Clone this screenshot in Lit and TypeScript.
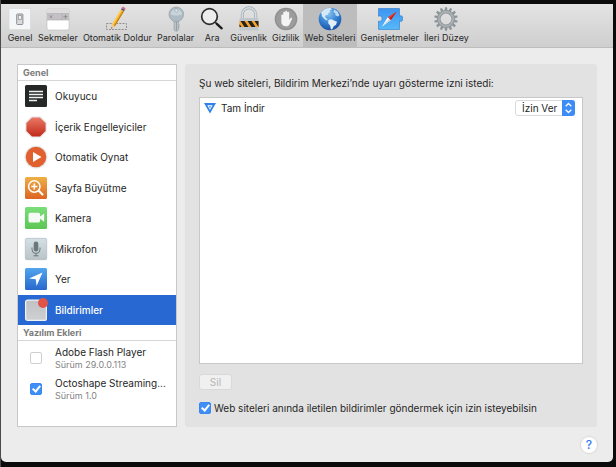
import { LitElement, html, css, svg, TemplateResult } from "lit";
import { customElement, state } from "lit/decorators.js";
import { classMap } from "lit/directives/class-map.js";

interface Entry {
  label: string;
  art: TemplateResult;
}

const gearTeeth = Array.from({ length: 14 }, (_, i) => i * (360 / 14));

// Toolbar drawings share a 26x26 canvas.
const tools: Entry[] = [
  {
    label: "Genel",
    art: svg`
      <rect x="2" y="2.5" width="21.500" height="21" rx="1" fill="#f4f6f7" stroke="#d3d6d8" stroke-width=".6"/>
      <rect x="9.700" y="8" width="6.200" height="10.500" rx=".8" fill="#d9dadb" stroke="#8d9093"/>
      <rect x="11.300" y="9.300" width="3" height="4" fill="#f5f5f5" stroke="#85888b" stroke-width=".7"/>`,
  },
  {
    label: "Sekmeler",
    art: svg`
      <rect x="2" y="2.500" width="22" height="21.500" rx="2" fill="#fff" stroke="#bcbcbc" stroke-width=".6"/>
      <path d="M2 4.500a2 2 0 0 1 2-2h18a2 2 0 0 1 2 2V7.500H2z" fill="#dedcdd"/>
      <rect x="2" y="7.500" width="22" height="6.500" fill="#c3c1c3"/>
      <path d="M2 7.500h22M2 14h22M17 7.500V14" stroke="#aaa8aa" stroke-width=".6"/>
      <path d="M4.500 9.300l2.800 2.800M7.300 9.300l-2.800 2.800M20.500 8.700v4M18.500 10.700h4" stroke="#8a888a" stroke-width=".9"/>`,
  },
  {
    label: "Otomatik Doldur",
    art: svg`
      <rect x="2.500" y="17.500" width="20" height="6" fill="none" stroke="#8e8e8e" stroke-dasharray="2 1.200"/>
      <path d="M7.300 22.800L8 18.500 17 3.400l3 1.900L11 20.300z" fill="#f1ae28"/>
      <path d="M8 18.500L17 3.400l1 .6L9 19.200z" fill="#fbd25c"/>
      <path d="M10 19.800L19 4.700l1 .6-9 15z" fill="#c87d16"/>
      <path d="M7.300 22.800L8 18.500l3 1.800z" fill="#ead0a0"/>
      <path d="M7.300 22.800l.2-1.600 1 .6z" fill="#222"/>
      <path d="M17 3.400l.9-1.500 3 1.900-.9 1.500z" fill="#4b5a66"/>
      <path d="M17.900 1.900c1-1.500 4-.2 3 1.900z" fill="#e1678f" stroke="#d4557f" stroke-width=".6"/>`,
  },
  {
    label: "Parolalar",
    art: svg`
      <path d="M11 14h4.600v10l-2.300 1.500L11 24z" fill="#b9c1c6" stroke="#929ca2" stroke-width=".6"/>
      <path d="M13.500 15v9.500" stroke="#8c969c" stroke-width=".8"/>
      <path d="M15.600 17.500l1.400 1-1.400 1 1.400 1.200-1.400 1.300z" fill="#a2acb2"/>
      <circle cx="13.300" cy="8.300" r="7.300" fill="#adbbc3" stroke="#8f9da5" stroke-width=".7"/>
      <path d="M7.500 8a5.900 5.900 0 0 1 11.600 0c-3 2-8.500 2-11.600 0z" fill="#c9d4da"/>
      <circle cx="13.300" cy="4.500" r="1.500" fill="#eef2f4" stroke="#81909a" stroke-width=".6"/>`,
  },
  {
    label: "Ara",
    art: svg`
      <circle cx="10.500" cy="10.500" r="7.800" fill="#f2f2f2" fill-opacity=".75" stroke="#2e2e2e" stroke-width="1.700"/>
      <path d="M16.200 16.200l2 2" stroke="#2e2e2e" stroke-width="1.600"/>
      <path d="M17.800 17.800l4.900 4.500" stroke="#1c1c1c" stroke-width="2.400" stroke-linecap="round"/>`,
  },
  {
    label: "Güvenlik",
    art: svg`
      <path d="M6.300 13V8.500a6.700 6.700 0 0 1 13.400 0V13" fill="none" stroke="#a1adb5" stroke-width="3"/>
      <path d="M6.300 13V8.500a6.700 6.700 0 0 1 13.400 0V13" fill="none" stroke="#d5dde2" stroke-width="1.500"/>
      <rect x="3.500" y="12" width="19" height="12.500" rx="1" fill="#c0c7cc"/>
      <rect x="3.500" y="15" width="19" height="6" fill="#f6a32b"/>
      <path d="M4.500 15h4l4 6h-4zM11.500 15h4l4 6h-4zM18.500 15h4v6zM3.500 18l2 3h-2z" fill="#26221e"/>`,
  },
  {
    label: "Gizlilik",
    art: svg`
      <circle cx="13" cy="13" r="11.300" fill="#8f8f8f"/>
      <circle cx="13" cy="13" r="10" fill="#9c9c9c"/>
      <path d="M8.300 16V9.200a1 1 0 0 1 1.900 0V12V6.800a1 1 0 0 1 2 0V12 5.800a1 1 0 0 1 2 0V12 6.800a1 1 0 0 1 2 0V14l1.300-1.900c.8-.9 2-.1 1.500.9L16.700 18c-.7 1.600-1.700 2.300-3.600 2.300-3 0-4.800-1.700-4.800-4.300z" fill="#f4f4f4"/>`,
  },
  {
    label: "Web Siteleri",
    art: svg`
      <defs><radialGradient id="sea" cx=".42" cy=".25" r=".8">
        <stop offset="0" stop-color="#8cc6f3"/><stop offset=".5" stop-color="#3a86d6"/><stop offset="1" stop-color="#134a9c"/>
      </radialGradient></defs>
      <circle cx="13" cy="13" r="11.300" fill="url(#sea)"/>
      <path d="M4 6.500C6.500 3 10 1.800 13.500 2l1.500 1.500-2.500.7 1 1.800-2 .8-.8 2.200-2.200.3-.3 2.200 2 1.300.3 1.700-2.800-1.200-2.700-3-.4-2.300z" fill="#d5e8f5"/>
      <path d="M11.500 13.700l3-.5 3 1.500 2.500 1-1 3-2.300 1.500-1.500 3-1.300.4-.7-3.800-2-2.600z" fill="#e3f0f8"/>
      <path d="M17 3.500l3.500 2 2 3.500-1.500 1.500-2.500-1-.2-2-1.800-1.500z" fill="#bcd9f0"/>`,
  },
  {
    label: "Genişletmeler",
    art: svg`
      <defs><linearGradient id="piece" x2="0" y2="1">
        <stop offset="0" stop-color="#3d94f0"/><stop offset="1" stop-color="#56b9f8"/>
      </linearGradient></defs>
      <path d="M1.500 2.500h21v7.700c1-.9 3.200-.8 3.200 1.700v1.300c0 2.400-2.200 2.600-3.200 1.700v8.600h-21V15c1.200.8 3.500.5 3.500-2.400S2.700 9.500 1.500 10.300z" fill="url(#piece)" stroke="#2b79c9" stroke-width=".6"/>
      <path d="M19.800 5.500L10.700 11.300l3 3z" fill="#ec3b30"/>
      <path d="M19.800 5.500L12.200 12.800l1.500 1.500z" fill="#b92320"/>
      <path d="M5 20.500l5.700-9.200 3 3z" fill="#fff"/>
      <path d="M5 20.500l7.200-7.700 1.500 1.500z" fill="#ccd5dc"/>`,
  },
  {
    label: "İleri Düzey",
    art: svg`
      ${gearTeeth.map((a) => svg`<path d="M12 1.200h2l.6 4h-3.200z" fill="#8c9498" transform="rotate(${a} 13 13)"/>`)}
      <circle cx="13" cy="13" r="7.200" fill="none" stroke="#929a9e" stroke-width="3.600"/>
      <circle cx="13" cy="13" r="7.200" fill="none" stroke="#adb4b8" stroke-width="1.500"/>`,
  },
];

// Sidebar drawings share a 24x24 canvas.
const sections: Entry[] = [
  {
    label: "Okuyucu",
    art: svg`
      <rect x="1" y="1" width="22" height="22" rx="1.500" fill="#262828"/>
      <path d="M5 7.500h14M5 10.500h14M5 13.500h14M5 16.500h8" stroke="#f1f1f1" stroke-width="1.500"/>`,
  },
  {
    label: "İçerik Engelleyiciler",
    art: svg`
      <defs><linearGradient id="stop" x2="0" y2="1">
        <stop offset="0" stop-color="#ea7965"/><stop offset="1" stop-color="#c02a18"/>
      </linearGradient></defs>
      <path d="M7.500 1.200h9l6.300 6.300v9l-6.300 6.300h-9L1.200 16.500v-9z" fill="#e9eaeb"/>
      <path d="M8 2.400h8L21.600 8v8L16 21.600H8L2.400 16V8z" fill="url(#stop)"/>`,
  },
  {
    label: "Otomatik Oynat",
    art: svg`
      <circle cx="12" cy="12" r="11.600" fill="#e7e9eb"/>
      <circle cx="12" cy="12" r="10.300" fill="#e0602f"/>
      <path d="M9 7v10l8.500-5z" fill="#fff"/>`,
  },
  {
    label: "Sayfa Büyütme",
    art: svg`
      <defs><linearGradient id="zoom" x2="0" y2="1">
        <stop offset="0" stop-color="#efb044"/><stop offset="1" stop-color="#dc6425"/>
      </linearGradient></defs>
      <rect x="1" y="1" width="22" height="22" rx="1.500" fill="url(#zoom)"/>
      <circle cx="10.300" cy="10.500" r="5.700" fill="none" stroke="#fff" stroke-width="1.500"/>
      <path d="M14.500 14.500l4 4" stroke="#fff" stroke-width="2" stroke-linecap="round"/>
      <path d="M10.300 7.500v6M7.300 10.500h6" stroke="#fff" stroke-width="1.600"/>`,
  },
  {
    label: "Kamera",
    art: svg`
      <defs><linearGradient id="cam" x2="0" y2="1">
        <stop offset="0" stop-color="#7ade78"/><stop offset="1" stop-color="#5cc653"/>
      </linearGradient></defs>
      <rect x="1" y="1" width="22" height="22" rx="1.500" fill="url(#cam)"/>
      <rect x="4.500" y="6.800" width="11.500" height="9.800" rx="1.500" fill="#f6faf6"/>
      <path d="M16 10.500l4.200-3v8.300l-4.200-3z" fill="#f6faf6"/>`,
  },
  {
    label: "Mikrofon",
    art: svg`
      <defs><linearGradient id="mic" x2="0" y2="1">
        <stop offset="0" stop-color="#d3e0e5"/><stop offset="1" stop-color="#b9c4c7"/>
      </linearGradient></defs>
      <rect x="1.300" y="1.300" width="21.400" height="21.400" rx="1.500" fill="url(#mic)" stroke="#a9b4b8" stroke-width=".6"/>
      <rect x="9.700" y="4.500" width="4.600" height="10" rx="2.300" fill="#6d777b"/>
      <path d="M8 10.500v2a4 4 0 0 0 8 0v-2M12 16.500v2.300M9.500 18.800h5" fill="none" stroke="#6d777b"/>`,
  },
  {
    label: "Yer",
    art: svg`
      <defs><linearGradient id="loc" x2="0" y2="1">
        <stop offset="0" stop-color="#52a5ee"/><stop offset="1" stop-color="#2768cc"/>
      </linearGradient></defs>
      <rect x="1" y="1" width="22" height="22" rx="1.500" fill="url(#loc)"/>
      <path d="M18.500 5.500L5 11.600l6.800.7.800 6.700z" fill="#fff"/>`,
  },
  {
    label: "Bildirimler",
    art: svg`
      <defs><linearGradient id="note" x2="0" y2="1">
        <stop offset="0" stop-color="#bfc1c4"/><stop offset="1" stop-color="#cfd0d2"/>
      </linearGradient></defs>
      <rect x="1.600" y="2.100" width="20.800" height="20.300" rx="2" fill="url(#note)" stroke="#f0f1f3" stroke-width="1.200"/>
      <circle cx="19" cy="5" r="5" fill="#e05349"/>`,
  },
];

const plugins = [
  { id: "flash", name: "Adobe Flash Player", version: "Sürüm 29.0.0.113", on: false },
  { id: "octo", name: "Octoshape Streaming...", version: "Sürüm 1.0", on: true },
];

@customElement("app-root")
export class AppRoot extends LitElement {
  @state() private section = "Bildirimler";

  static styles = css`
    :host {
      display: flex;
      box-sizing: border-box;
      min-height: 100vh;
      padding: 4px 3px 5px 1px;
      background: linear-gradient(to right, #4c4c4c 1px, #0b0b0b 1px);
      color: #262626;
      font-family: Inter, "Liberation Sans", sans-serif;
      font-size: 10px;
      line-height: 14px;
    }
    button, select, input { font: inherit; color: inherit; margin: 0; }
    button { border: 0; padding: 0; background: none; }
    svg { display: block; flex: none; }
    .window {
      flex: 1;
      min-width: 0;
      display: flex;
      flex-direction: column;
      background: #ececec;
      border-radius: 0 0 5px 5px;
      overflow: hidden;
    }
    .toolbar {
      display: flex;
      gap: 1px;
      padding-left: 4px;
      border-bottom: 1px solid #bdbdbd;
      background: linear-gradient(#e3e3e3, #cfcfcf);
    }
    .tool {
      display: flex;
      flex-direction: column;
      align-items: center;
      padding: 2px 2px 3px;
      font-size: 9px;
      line-height: 12px;
      white-space: nowrap;
    }
    .tool.on { background: #bdbdbd; }
    .content {
      flex: 1;
      display: grid;
      grid-template-columns: 160px 1fr;
      gap: 8px;
      padding: 16px 16px 8px;
    }
    .sidebar {
      display: flex;
      flex-direction: column;
      box-sizing: border-box;
      background: #fff;
      border: 1px solid #c8c8c8;
    }
    .heading {
      margin: 0;
      padding: 1px 5px 0;
      border-bottom: 1px solid #d6d6d6;
      color: #7c7c7c;
      font-size: 9px;
      font-weight: 700;
      line-height: 14px;
    }
    .sections {
      display: grid;
      grid-auto-rows: 1fr;
      height: 244px;
      margin: 0;
      padding: 0;
      list-style: none;
    }
    .section {
      display: flex;
      align-items: center;
      gap: 7px;
      width: 100%;
      height: 100%;
      padding: 0 6px;
      text-align: left;
    }
    .section.on { background: #2768d2; color: #fff; font-weight: 500; }
    .plugin {
      display: grid;
      grid-template-columns: 12px 1fr;
      column-gap: 13px;
      align-items: center;
      padding: 4px 0 1px 12px;
      white-space: nowrap;
    }
    .plugin + .plugin { padding-top: 5px; }
    .name { display: block; line-height: 14px; }
    .version { display: block; color: #858585; font-size: 9px; line-height: 11px; }
    .check {
      appearance: none;
      box-sizing: border-box;
      flex: none;
      width: 12px;
      height: 12px;
      border: 1px solid #cfcfcf;
      border-radius: 2px;
      background: #fff;
    }
    .check:checked {
      display: grid;
      place-items: center;
      border-color: #3c87ee;
      background: #3f8ff7;
    }
    .check:checked::after {
      content: "";
      width: 3px;
      height: 6px;
      margin-bottom: 2px;
      border: solid #fff;
      border-width: 0 2px 2px 0;
      transform: rotate(40deg);
    }
    .panel {
      display: flex;
      flex-direction: column;
      align-items: flex-start;
      padding: 12px 14px;
      border-radius: 3px;
      background: #e2e2e2;
    }
    .lead { margin: 0 0 7px; }
    .sites {
      flex: 1;
      box-sizing: border-box;
      width: 100%;
      margin: 0 0 10px;
      padding: 2px 7px 2px 4px;
      border: 1px solid #c8c8c8;
      background: #fff;
      list-style: none;
    }
    .site { display: flex; align-items: center; gap: 5px; }
    .site label { flex: 1; }
    .picker { position: relative; display: flex; }
    .picker select {
      appearance: none;
      box-sizing: border-box;
      width: 60px;
      height: 16px;
      padding: 0 0 0 6px;
      border: 1px solid #d9d9d9;
      border-radius: 3px;
      background: #fff;
    }
    .arrows {
      position: absolute;
      right: 0;
      top: 0;
      pointer-events: none;
    }
    .delete {
      width: 33px;
      height: 16px;
      margin-bottom: 11px;
      border: 1px solid #d9d9d9;
      border-radius: 3px;
      background: #f0f0f0;
      color: #b4b4b4;
      line-height: 14px;
    }
    .ask { display: flex; align-items: center; gap: 3px; }
    .footer { display: flex; justify-content: flex-end; padding: 2px 16px 9px; }
    .help {
      width: 16px;
      height: 16px;
      border-radius: 50%;
      background: #fff;
      box-shadow: 0 0 1px 1px #d8d8d8;
      color: #2f79ee;
      font-size: 12px;
      font-weight: 500;
      line-height: 16px;
    }
  `;

  render() {
    return html`
      <main class="window">
        <nav class="toolbar">
          ${tools.map(
            (t) => html`<button class=${classMap({ tool: true, on: t.label === "Web Siteleri" })}>
              <svg width="26" height="26" viewBox="0 0 26 26" aria-hidden="true">${t.art}</svg>
              ${t.label}
            </button>`
          )}
        </nav>
        <div class="content">
          <aside class="sidebar">
            <h2 class="heading">Genel</h2>
            <ul class="sections">
              ${sections.map(
                (s) => html`<li>
                  <button
                    class=${classMap({ section: true, on: s.label === this.section })}
                    @click=${() => (this.section = s.label)}
                  >
                    <svg width="24" height="24" viewBox="0 0 24 24" aria-hidden="true">${s.art}</svg>
                    ${s.label}
                  </button>
                </li>`
              )}
            </ul>
            <h2 class="heading">Yazılım Ekleri</h2>
            ${plugins.map(
              (p) => html`<div class="plugin">
                <input class="check" type="checkbox" id=${p.id} .checked=${p.on} />
                <label for=${p.id}>
                  <span class="name">${p.name}</span>
                  <span class="version">${p.version}</span>
                </label>
              </div>`
            )}
          </aside>
          <section class="panel">
            <p class="lead">Şu web siteleri, Bildirim Merkezi’nde uyarı gösterme izni istedi:</p>
            <ul class="sites">
              <li class="site">
                <svg width="12" height="12" viewBox="0 0 12 12" aria-hidden="true">
                  <path d="M0 1h12L6 11.500z" fill="#2f80e8" />
                  <path d="M3.300 3.300h5.400L6 8z" fill="#fff" />
                  <path d="M4.700 4.200h2.600L6 6.600z" fill="#5aa0f0" />
                </svg>
                <label for="permission">Tam İndir</label>
                <span class="picker">
                  <select id="permission">
                    <option>İzin Ver</option>
                  </select>
                  <svg class="arrows" width="13" height="16" viewBox="0 0 13 16" aria-hidden="true">
                    <path d="M0 0h10a3 3 0 0 1 3 3v10a3 3 0 0 1-3 3H0z" fill="#3b8cf6" />
                    <path d="M3.700 6.300l2.800-2.800 2.800 2.800M3.700 9.700l2.800 2.800 2.800-2.800" fill="none" stroke="#fff" stroke-width="1.300" />
                  </svg>
                </span>
              </li>
            </ul>
            <button class="delete" disabled>Sil</button>
            <div class="ask">
              <input class="check" type="checkbox" id="ask" checked />
              <label for="ask">Web siteleri anında iletilen bildirimler göndermek için izin isteyebilsin</label>
            </div>
          </section>
        </div>
        <footer class="footer"><button class="help" aria-label="Yardım">?</button></footer>
      </main>
    `;
  }
}
